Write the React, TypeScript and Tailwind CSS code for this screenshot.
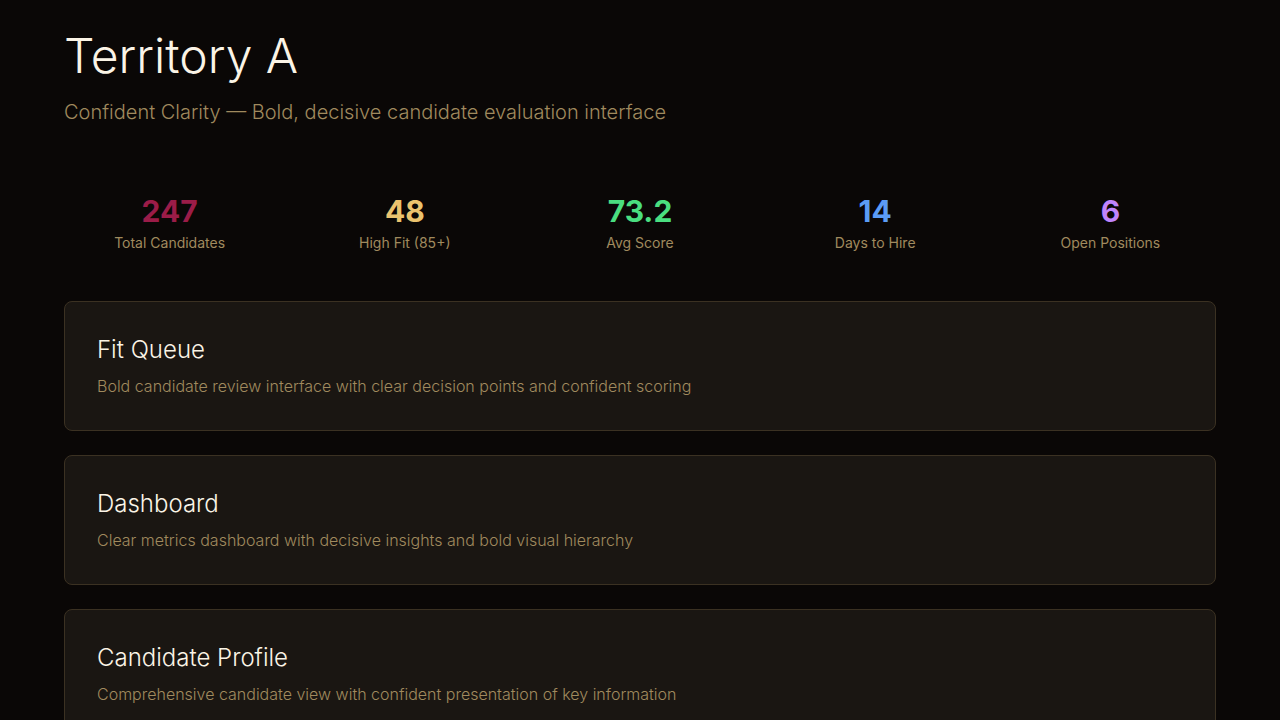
const stats = [
  { value: "247", label: "Total Candidates", color: "text-[#9b1c48]" },
  { value: "48", label: "High Fit (85+)", color: "text-[#ebc36e]" },
  { value: "73.2", label: "Avg Score", color: "text-[#4ade80]" },
  { value: "14", label: "Days to Hire", color: "text-[#5b9cf6]" },
  { value: "6", label: "Open Positions", color: "text-[#c084fc]" },
];

const sections = [
  {
    title: "Fit Queue",
    description: "Bold candidate review interface with clear decision points and confident scoring",
  },
  {
    title: "Dashboard",
    description: "Clear metrics dashboard with decisive insights and bold visual hierarchy",
  },
  {
    title: "Candidate Profile",
    description: "Comprehensive candidate view with confident presentation of key information",
  },
];

export default function App() {
  return (
    <div className="min-h-screen bg-[#0a0706] font-['Inter',sans-serif] text-[#fbf4e6]">
      <div className="mx-auto max-w-6xl pt-8 pb-16">
        <header className="mb-[47px]">
          <h1 className="text-5xl font-light">Territory A</h1>
          <p className="mt-[18px] text-xl font-light text-[#a08a5e]">
            Confident Clarity — Bold, decisive candidate evaluation interface
          </p>
        </header>

        <div className="mb-7 grid grid-cols-5 gap-6">
          {stats.map((s) => (
            <div key={s.label} className="py-5 text-center">
              <div className={`text-3xl font-bold ${s.color}`}>{s.value}</div>
              <div className="mt-1 text-sm text-[#a08a5e]">{s.label}</div>
            </div>
          ))}
        </div>

        <div className="space-y-6">
          {sections.map((s) => (
            <div
              key={s.title}
              className="rounded-lg border border-[#3b3122] bg-[#1a1612] p-8"
            >
              <h2 className="mb-2 text-2xl font-light">{s.title}</h2>
              <p className="text-base font-light text-[#a08a5e]">{s.description}</p>
            </div>
          ))}
        </div>
      </div>
    </div>
  );
}
